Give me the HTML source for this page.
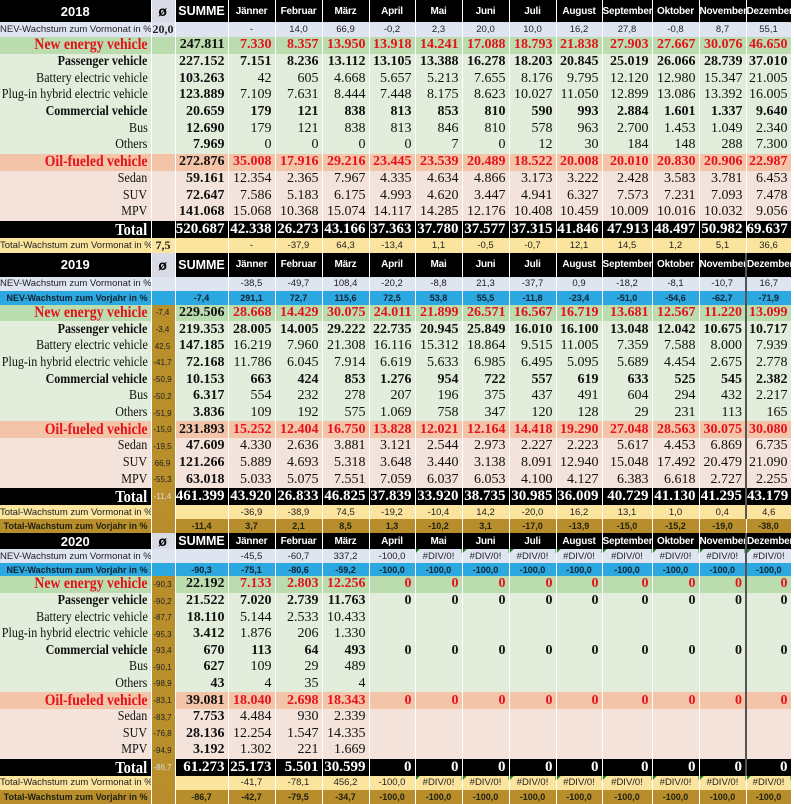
<!DOCTYPE html>
<html><head><meta charset="utf-8">
<style>
*{margin:0;padding:0;box-sizing:border-box}
body{width:794px;height:801px;background:#fff;overflow:hidden;font-family:"Liberation Serif",serif}
table{border-collapse:collapse;table-layout:fixed;width:791px}
td{padding:0 3px 0 0;overflow:hidden;white-space:nowrap;text-align:right;border-right:1px solid rgba(255,255,255,.85);line-height:1;vertical-align:middle}
td.l{padding-right:3px}
.l span{display:inline-block;transform:scaleX(.86);transform-origin:right center;margin-left:-60px}
.hdr td{background:#000;color:#fff;font:bold 10px "Liberation Sans",sans-serif;text-align:center;padding:0;letter-spacing:-.2px}
.hdr td.y{font-size:13px;letter-spacing:0}
.hdr td.o{background:#d8dbe6;color:#000;font-size:14px}
.hdr td.s{font-size:12.5px;letter-spacing:0}
.sm td{font:9.5px "Liberation Sans",sans-serif;text-align:center;padding:0;color:#222}
.sm td.l{text-align:right;padding-right:3px}
.nv td{background:#dfe4f1}
.nj td{background:#2aa8df;font-weight:bold;font-size:9px;color:#123}
.tv td{background:#fbe49d}
.tj td{background:#b78e2b;font-weight:bold;font-size:9px;color:#221}
.big td{font-size:14px}
.nev td{background:#bbdcaf;color:#e3121b;font-weight:bold}
.nev td.l{font-size:16px}
.g td{background:#e2eedb;color:#111}
.oil td{background:#f4c4a9;color:#e3121b;font-weight:bold}
.oil td.l{font-size:16px}
.p td{background:#f4e3da;color:#111}
.tot td{background:#000;color:#fff;font-weight:bold;font-size:15px}
.tot td.l{font-size:17px}
td.o{padding:0 1px 0 0;text-align:center}
.big td.o,.tot td.o,.sm.tv td.o2{font:8px "Liberation Sans",sans-serif;color:#222;background:#b88f2b}
.tot td.o{color:#ddd}
td.t{font-weight:bold}
.dz{border-left:2px solid #555}
.e{background-image:linear-gradient(135deg,#1f7a1f 3px,transparent 3px)!important}
</style></head><body>

<table>
<colgroup><col style="width:151px"><col style="width:24px"><col style="width:53px"><col style="width:47px"><col style="width:47px"><col style="width:47px"><col style="width:46px"><col style="width:47px"><col style="width:47px"><col style="width:47px"><col style="width:46px"><col style="width:50px"><col style="width:47px"><col style="width:47px"><col style="width:45px"></colgroup>
<tr class="hdr" style="height:22px"><td class="y">2018</td><td class="o">ø</td><td class="s">SUMME</td><td>Jänner</td><td>Februar</td><td>März</td><td>April</td><td>Mai</td><td>Juni</td><td>Juli</td><td>August</td><td>September</td><td>Oktober</td><td>November</td><td>Dezember</td></tr>
<tr class="sm nv" style="height:14px"><td class="l">NEV-Wachstum zum Vormonat in %</td><td style="font:bold 12px 'Liberation Serif',serif">20,0</td><td></td><td>-</td><td>14,0</td><td>66,9</td><td>-0,2</td><td>2,3</td><td>20,0</td><td>10,0</td><td>16,2</td><td>27,8</td><td>-0,8</td><td>8,7</td><td>55,1</td></tr>
<tr class="big nev" style="height:16.7px"><td class="l"><span>New energy vehicle</span></td><td></td><td class="t" style="color:#111">247.811</td><td>7.330</td><td>8.357</td><td>13.950</td><td>13.918</td><td>14.241</td><td>17.088</td><td>18.793</td><td>21.838</td><td>27.903</td><td>27.667</td><td>30.076</td><td>46.650</td></tr>
<tr class="big g" style="height:16.7px"><td class="l t"><span>Passenger vehicle</span></td><td></td><td class="t">227.152</td><td class="t">7.151</td><td class="t">8.236</td><td class="t">13.112</td><td class="t">13.105</td><td class="t">13.388</td><td class="t">16.278</td><td class="t">18.203</td><td class="t">20.845</td><td class="t">25.019</td><td class="t">26.066</td><td class="t">28.739</td><td class="t">37.010</td></tr>
<tr class="big g" style="height:16.7px"><td class="l"><span>Battery electric vehicle</span></td><td></td><td class="t">103.263</td><td>42</td><td>605</td><td>4.668</td><td>5.657</td><td>5.213</td><td>7.655</td><td>8.176</td><td>9.795</td><td>12.120</td><td>12.980</td><td>15.347</td><td>21.005</td></tr>
<tr class="big g" style="height:16.7px"><td class="l"><span>Plug-in hybrid electric vehicle</span></td><td></td><td class="t">123.889</td><td>7.109</td><td>7.631</td><td>8.444</td><td>7.448</td><td>8.175</td><td>8.623</td><td>10.027</td><td>11.050</td><td>12.899</td><td>13.086</td><td>13.392</td><td>16.005</td></tr>
<tr class="big g" style="height:16.7px"><td class="l t"><span>Commercial vehicle</span></td><td></td><td class="t">20.659</td><td class="t">179</td><td class="t">121</td><td class="t">838</td><td class="t">813</td><td class="t">853</td><td class="t">810</td><td class="t">590</td><td class="t">993</td><td class="t">2.884</td><td class="t">1.601</td><td class="t">1.337</td><td class="t">9.640</td></tr>
<tr class="big g" style="height:16.7px"><td class="l"><span>Bus</span></td><td></td><td class="t">12.690</td><td>179</td><td>121</td><td>838</td><td>813</td><td>846</td><td>810</td><td>578</td><td>963</td><td>2.700</td><td>1.453</td><td>1.049</td><td>2.340</td></tr>
<tr class="big g" style="height:16.7px"><td class="l"><span>Others</span></td><td></td><td class="t">7.969</td><td>0</td><td>0</td><td>0</td><td>0</td><td>7</td><td>0</td><td>12</td><td>30</td><td>184</td><td>148</td><td>288</td><td>7.300</td></tr>
<tr class="big oil" style="height:16.7px"><td class="l"><span>Oil-fueled vehicle</span></td><td></td><td class="t" style="color:#111">272.876</td><td>35.008</td><td>17.916</td><td>29.216</td><td>23.445</td><td>23.539</td><td>20.489</td><td>18.522</td><td>20.008</td><td>20.010</td><td>20.830</td><td>20.906</td><td>22.987</td></tr>
<tr class="big p" style="height:16.7px"><td class="l"><span>Sedan</span></td><td></td><td class="t">59.161</td><td>12.354</td><td>2.365</td><td>7.967</td><td>4.335</td><td>4.634</td><td>4.866</td><td>3.173</td><td>3.222</td><td>2.428</td><td>3.583</td><td>3.781</td><td>6.453</td></tr>
<tr class="big p" style="height:16.7px"><td class="l"><span>SUV</span></td><td></td><td class="t">72.647</td><td>7.586</td><td>5.183</td><td>6.175</td><td>4.993</td><td>4.620</td><td>3.447</td><td>4.941</td><td>6.327</td><td>7.573</td><td>7.231</td><td>7.093</td><td>7.478</td></tr>
<tr class="big p" style="height:16.7px"><td class="l"><span>MPV</span></td><td></td><td class="t">141.068</td><td>15.068</td><td>10.368</td><td>15.074</td><td>14.117</td><td>14.285</td><td>12.176</td><td>10.408</td><td>10.459</td><td>10.009</td><td>10.016</td><td>10.032</td><td>9.056</td></tr>
<tr class="big tot" style="height:17px"><td class="l"><span>Total</span></td><td></td><td>520.687</td><td>42.338</td><td>26.273</td><td>43.166</td><td>37.363</td><td>37.780</td><td>37.577</td><td>37.315</td><td>41.846</td><td>47.913</td><td>48.497</td><td>50.982</td><td>69.637</td></tr>
<tr class="sm tv" style="height:13px"><td class="l">Total-Wachstum zum Vormonat in %</td><td style="font:bold 12px 'Liberation Serif',serif">7,5</td><td></td><td>-</td><td>-37,9</td><td>64,3</td><td>-13,4</td><td>1,1</td><td>-0,5</td><td>-0,7</td><td>12,1</td><td>14,5</td><td>1,2</td><td>5,1</td><td>36,6</td></tr>
</table>

<table>
<colgroup><col style="width:151px"><col style="width:24px"><col style="width:53px"><col style="width:47px"><col style="width:47px"><col style="width:47px"><col style="width:46px"><col style="width:47px"><col style="width:47px"><col style="width:47px"><col style="width:46px"><col style="width:50px"><col style="width:47px"><col style="width:47px"><col style="width:45px"></colgroup>
<tr class="hdr" style="height:24px"><td class="y">2019</td><td class="o">ø</td><td class="s">SUMME</td><td>Jänner</td><td>Februar</td><td>März</td><td>April</td><td>Mai</td><td>Juni</td><td>Juli</td><td>August</td><td>September</td><td>Oktober</td><td>November</td><td class="dz">Dezember</td></tr>
<tr class="sm nv" style="height:14px"><td class="l">NEV-Wachstum zum Vormonat in %</td><td></td><td></td><td>-38,5</td><td>-49,7</td><td>108,4</td><td>-20,2</td><td>-8,8</td><td>21,3</td><td>-37,7</td><td>0,9</td><td>-18,2</td><td>-8,1</td><td>-10,7</td><td class="dz">16,7</td></tr>
<tr class="sm nj" style="height:14px"><td class="l">NEV-Wachstum zum Vorjahr in %</td><td></td><td>-7,4</td><td>291,1</td><td>72,7</td><td>115,6</td><td>72,5</td><td>53,8</td><td>55,5</td><td>-11,8</td><td>-23,4</td><td>-51,0</td><td>-54,6</td><td>-62,7</td><td class="dz">-71,9</td></tr>
<tr class="big nev" style="height:16.7px"><td class="l"><span>New energy vehicle</span></td><td class="o">-7,4</td><td class="t" style="color:#111">229.506</td><td>28.668</td><td>14.429</td><td>30.075</td><td>24.011</td><td>21.899</td><td>26.571</td><td>16.567</td><td>16.719</td><td>13.681</td><td>12.567</td><td>11.220</td><td class="dz">13.099</td></tr>
<tr class="big g" style="height:16.7px"><td class="l t"><span>Passenger vehicle</span></td><td class="o">-3,4</td><td class="t">219.353</td><td class="t">28.005</td><td class="t">14.005</td><td class="t">29.222</td><td class="t">22.735</td><td class="t">20.945</td><td class="t">25.849</td><td class="t">16.010</td><td class="t">16.100</td><td class="t">13.048</td><td class="t">12.042</td><td class="t">10.675</td><td class="t dz">10.717</td></tr>
<tr class="big g" style="height:16.7px"><td class="l"><span>Battery electric vehicle</span></td><td class="o">42,5</td><td class="t">147.185</td><td>16.219</td><td>7.960</td><td>21.308</td><td>16.116</td><td>15.312</td><td>18.864</td><td>9.515</td><td>11.005</td><td>7.359</td><td>7.588</td><td>8.000</td><td class="dz">7.939</td></tr>
<tr class="big g" style="height:16.7px"><td class="l"><span>Plug-in hybrid electric vehicle</span></td><td class="o">-41,7</td><td class="t">72.168</td><td>11.786</td><td>6.045</td><td>7.914</td><td>6.619</td><td>5.633</td><td>6.985</td><td>6.495</td><td>5.095</td><td>5.689</td><td>4.454</td><td>2.675</td><td class="dz">2.778</td></tr>
<tr class="big g" style="height:16.7px"><td class="l t"><span>Commercial vehicle</span></td><td class="o">-50,9</td><td class="t">10.153</td><td class="t">663</td><td class="t">424</td><td class="t">853</td><td class="t">1.276</td><td class="t">954</td><td class="t">722</td><td class="t">557</td><td class="t">619</td><td class="t">633</td><td class="t">525</td><td class="t">545</td><td class="t dz">2.382</td></tr>
<tr class="big g" style="height:16.7px"><td class="l"><span>Bus</span></td><td class="o">-50,2</td><td class="t">6.317</td><td>554</td><td>232</td><td>278</td><td>207</td><td>196</td><td>375</td><td>437</td><td>491</td><td>604</td><td>294</td><td>432</td><td class="dz">2.217</td></tr>
<tr class="big g" style="height:16.7px"><td class="l"><span>Others</span></td><td class="o">-51,9</td><td class="t">3.836</td><td>109</td><td>192</td><td>575</td><td>1.069</td><td>758</td><td>347</td><td>120</td><td>128</td><td>29</td><td>231</td><td>113</td><td class="dz">165</td></tr>
<tr class="big oil" style="height:16.7px"><td class="l"><span>Oil-fueled vehicle</span></td><td class="o">-15,0</td><td class="t" style="color:#111">231.893</td><td>15.252</td><td>12.404</td><td>16.750</td><td>13.828</td><td>12.021</td><td>12.164</td><td>14.418</td><td>19.290</td><td>27.048</td><td>28.563</td><td>30.075</td><td class="dz">30.080</td></tr>
<tr class="big p" style="height:16.7px"><td class="l"><span>Sedan</span></td><td class="o">-19,5</td><td class="t">47.609</td><td>4.330</td><td>2.636</td><td>3.881</td><td>3.121</td><td>2.544</td><td>2.973</td><td>2.227</td><td>2.223</td><td>5.617</td><td>4.453</td><td>6.869</td><td class="dz">6.735</td></tr>
<tr class="big p" style="height:16.7px"><td class="l"><span>SUV</span></td><td class="o">66,9</td><td class="t">121.266</td><td>5.889</td><td>4.693</td><td>5.318</td><td>3.648</td><td>3.440</td><td>3.138</td><td>8.091</td><td>12.940</td><td>15.048</td><td>17.492</td><td>20.479</td><td class="dz">21.090</td></tr>
<tr class="big p" style="height:16.7px"><td class="l"><span>MPV</span></td><td class="o">-55,3</td><td class="t">63.018</td><td>5.033</td><td>5.075</td><td>7.551</td><td>7.059</td><td>6.037</td><td>6.053</td><td>4.100</td><td>4.127</td><td>6.383</td><td>6.618</td><td>2.727</td><td class="dz">2.255</td></tr>
<tr class="big tot" style="height:16px"><td class="l"><span>Total</span></td><td class="o">-11,4</td><td>461.399</td><td>43.920</td><td>26.833</td><td>46.825</td><td>37.839</td><td>33.920</td><td>38.735</td><td>30.985</td><td>36.009</td><td>40.729</td><td>41.130</td><td>41.295</td><td class="dz">43.179</td></tr>
<tr class="sm tv" style="height:14px"><td class="l">Total-Wachstum zum Vormonat in %</td><td class="o2"></td><td></td><td>-36,9</td><td>-38,9</td><td>74,5</td><td>-19,2</td><td>-10,4</td><td>14,2</td><td>-20,0</td><td>16,2</td><td>13,1</td><td>1,0</td><td>0,4</td><td class="dz">4,6</td></tr>
<tr class="sm tj" style="height:14px"><td class="l">Total-Wachstum zum Vorjahr in %</td><td></td><td>-11,4</td><td>3,7</td><td>2,1</td><td>8,5</td><td>1,3</td><td>-10,2</td><td>3,1</td><td>-17,0</td><td>-13,9</td><td>-15,0</td><td>-15,2</td><td>-19,0</td><td>-38,0</td></tr>
</table>

<table>
<colgroup><col style="width:151px"><col style="width:24px"><col style="width:53px"><col style="width:47px"><col style="width:47px"><col style="width:47px"><col style="width:46px"><col style="width:47px"><col style="width:47px"><col style="width:47px"><col style="width:46px"><col style="width:50px"><col style="width:47px"><col style="width:47px"><col style="width:45px"></colgroup>
<tr class="hdr" style="height:16px"><td class="y">2020</td><td class="o">ø</td><td class="s">SUMME</td><td>Jänner</td><td>Februar</td><td>März</td><td>April</td><td>Mai</td><td>Juni</td><td>Juli</td><td>August</td><td>September</td><td>Oktober</td><td>November</td><td class="dz">Dezember</td></tr>
<tr class="sm nv" style="height:14px"><td class="l">NEV-Wachstum zum Vormonat in %</td><td></td><td></td><td>-45,5</td><td>-60,7</td><td>337,2</td><td>-100,0</td><td class="e">#DIV/0!</td><td class="e">#DIV/0!</td><td class="e">#DIV/0!</td><td class="e">#DIV/0!</td><td class="e">#DIV/0!</td><td class="e">#DIV/0!</td><td class="e">#DIV/0!</td><td class="e dz">#DIV/0!</td></tr>
<tr class="sm nj" style="height:13px"><td class="l">NEV-Wachstum zum Vorjahr in %</td><td></td><td>-90,3</td><td>-75,1</td><td>-80,6</td><td>-59,2</td><td>-100,0</td><td>-100,0</td><td>-100,0</td><td>-100,0</td><td>-100,0</td><td>-100,0</td><td>-100,0</td><td>-100,0</td><td class="dz">-100,0</td></tr>
<tr class="big nev" style="height:16.6px"><td class="l"><span>New energy vehicle</span></td><td class="o">-90,3</td><td class="t" style="color:#111">22.192</td><td>7.133</td><td>2.803</td><td>12.256</td><td>0</td><td>0</td><td>0</td><td>0</td><td>0</td><td>0</td><td>0</td><td>0</td><td class="dz">0</td></tr>
<tr class="big g" style="height:16.6px"><td class="l t"><span>Passenger vehicle</span></td><td class="o">-90,2</td><td class="t">21.522</td><td class="t">7.020</td><td class="t">2.739</td><td class="t">11.763</td><td class="t">0</td><td class="t">0</td><td class="t">0</td><td class="t">0</td><td class="t">0</td><td class="t">0</td><td class="t">0</td><td class="t">0</td><td class="t dz">0</td></tr>
<tr class="big g" style="height:16.6px"><td class="l"><span>Battery electric vehicle</span></td><td class="o">-87,7</td><td class="t">18.110</td><td>5.144</td><td>2.533</td><td>10.433</td><td></td><td></td><td></td><td></td><td></td><td></td><td></td><td></td><td class="dz"></td></tr>
<tr class="big g" style="height:16.6px"><td class="l"><span>Plug-in hybrid electric vehicle</span></td><td class="o">-95,3</td><td class="t">3.412</td><td>1.876</td><td>206</td><td>1.330</td><td></td><td></td><td></td><td></td><td></td><td></td><td></td><td></td><td class="dz"></td></tr>
<tr class="big g" style="height:16.6px"><td class="l t"><span>Commercial vehicle</span></td><td class="o">-93,4</td><td class="t">670</td><td class="t">113</td><td class="t">64</td><td class="t">493</td><td class="t">0</td><td class="t">0</td><td class="t">0</td><td class="t">0</td><td class="t">0</td><td class="t">0</td><td class="t">0</td><td class="t">0</td><td class="t dz">0</td></tr>
<tr class="big g" style="height:16.6px"><td class="l"><span>Bus</span></td><td class="o">-90,1</td><td class="t">627</td><td>109</td><td>29</td><td>489</td><td></td><td></td><td></td><td></td><td></td><td></td><td></td><td></td><td class="dz"></td></tr>
<tr class="big g" style="height:16.6px"><td class="l"><span>Others</span></td><td class="o">-98,9</td><td class="t">43</td><td>4</td><td>35</td><td>4</td><td></td><td></td><td></td><td></td><td></td><td></td><td></td><td></td><td class="dz"></td></tr>
<tr class="big oil" style="height:16.6px"><td class="l"><span>Oil-fueled vehicle</span></td><td class="o">-83,1</td><td class="t" style="color:#111">39.081</td><td>18.040</td><td>2.698</td><td>18.343</td><td>0</td><td>0</td><td>0</td><td>0</td><td>0</td><td>0</td><td>0</td><td>0</td><td class="dz">0</td></tr>
<tr class="big p" style="height:16.6px"><td class="l"><span>Sedan</span></td><td class="o">-83,7</td><td class="t">7.753</td><td>4.484</td><td>930</td><td>2.339</td><td></td><td></td><td></td><td></td><td></td><td></td><td></td><td></td><td class="dz"></td></tr>
<tr class="big p" style="height:16.6px"><td class="l"><span>SUV</span></td><td class="o">-76,8</td><td class="t">28.136</td><td>12.254</td><td>1.547</td><td>14.335</td><td></td><td></td><td></td><td></td><td></td><td></td><td></td><td></td><td class="dz"></td></tr>
<tr class="big p" style="height:16.6px"><td class="l"><span>MPV</span></td><td class="o">-94,9</td><td class="t">3.192</td><td>1.302</td><td>221</td><td>1.669</td><td></td><td></td><td></td><td></td><td></td><td></td><td></td><td></td><td class="dz"></td></tr>
<tr class="big tot" style="height:16.4px"><td class="l"><span>Total</span></td><td class="o">-86,7</td><td>61.273</td><td>25.173</td><td>5.501</td><td>30.599</td><td>0</td><td>0</td><td>0</td><td>0</td><td>0</td><td>0</td><td>0</td><td>0</td><td class="dz">0</td></tr>
<tr class="sm tv" style="height:14px"><td class="l">Total-Wachstum zum Vormonat in %</td><td class="o2"></td><td></td><td>-41,7</td><td>-78,1</td><td>456,2</td><td>-100,0</td><td class="e">#DIV/0!</td><td class="e">#DIV/0!</td><td class="e">#DIV/0!</td><td class="e">#DIV/0!</td><td class="e">#DIV/0!</td><td class="e">#DIV/0!</td><td class="e">#DIV/0!</td><td class="e">#DIV/0!</td></tr>
<tr class="sm tj" style="height:14px"><td class="l">Total-Wachstum zum Vorjahr in %</td><td></td><td>-86,7</td><td>-42,7</td><td>-79,5</td><td>-34,7</td><td>-100,0</td><td>-100,0</td><td>-100,0</td><td>-100,0</td><td>-100,0</td><td>-100,0</td><td>-100,0</td><td>-100,0</td><td>-100,0</td></tr>
</table>
</body></html>
